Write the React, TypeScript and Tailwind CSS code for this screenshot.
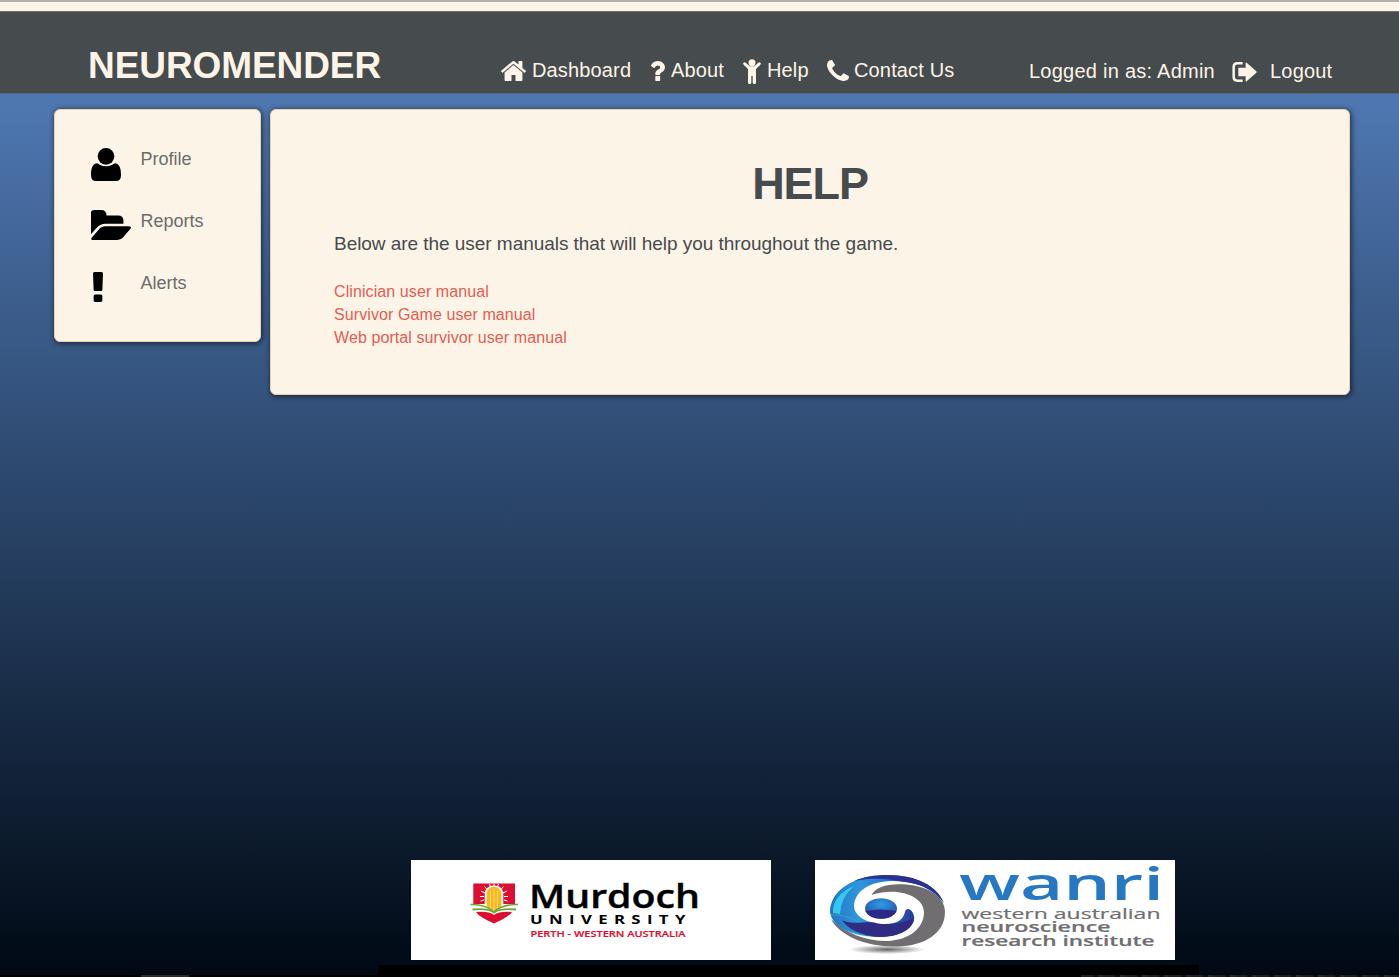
import React from "react";

type IconProps = { className?: string };

const HomeIcon = ({ className }: IconProps) => (
  <svg viewBox="89 253 1614 1283" preserveAspectRatio="none" className={className} fill="currentColor">
    <path d="M1472 992v480q0 26-19 45t-45 19h-384v-384h-256v384h-384q-26 0-45-19t-19-45v-480q0-1 .5-3t.5-3l575-474 575 474q1 2 1 6zm223-69l-62 74q-8 9-21 11h-3q-13 0-21-7l-692-577-692 577q-12 8-24 7-13-2-21-11l-62-74q-8-10-7-23.5t11-21.5l719-599q32-26 76-26t76 26l244 204v-195q0-14 9-23t23-9h192q14 0 23 9t9 23v408l219 182q10 8 11 21.5t-7 23.5z" />
  </svg>
);

const QuestionIcon = ({ className }: IconProps) => (
  <svg viewBox="484 256 922 1280" preserveAspectRatio="none" className={className} fill="currentColor">
    <path d="M1088 1256v240q0 16-12 28t-28 12h-240q-16 0-28-12t-12-28v-240q0-16 12-28t28-12h240q16 0 28 12t12 28zm316-600q0 54-15.5 101t-35 76.5-55 59.5-57.5 43.5-61 35.5q-41 23-68.5 65t-27.5 67q0 17-12 32.5t-28 15.5h-240q-15 0-25.5-18.5t-10.5-37.5v-45q0-83 65-156.5t143-108.5q59-27 84-56t25-76q0-42-46.5-74t-107.5-32q-65 0-108 29-35 25-107 115-13 16-31 16-12 0-25-8l-164-125q-13-10-15.5-25t5.5-28q160-266 464-266 80 0 161 31t146 83 106 127.5 41 158.5z" />
  </svg>
);

const ChildIcon = ({ className }: IconProps) => (
  <svg viewBox="0 0 54 75" className={className} fill="currentColor">
    <circle cx="27" cy="11" r="10.5" />
    <path d="M1.5 11Q5 8 8 11L20 22H34L46 11Q49 8 52.500 11Q55 14 52 17L39 30V71Q39 75 34.500 75Q29 75 29 71V51H25V71Q25 75 20 75Q15 75 15 71V30L2 17Q-1 14 1.500 11Z" />
  </svg>
);

const PhoneIcon = ({ className }: IconProps) => (
  <svg viewBox="192 128 1408 1408" preserveAspectRatio="none" className={className} fill="currentColor">
    <path d="M1600 1240q0 27-10 70.5t-21 68.5q-21 50-122 106-94 51-186 51-27 0-52.5-3.5t-57.5-12.5-47.5-14.5-55.5-20.5-49-18q-98-35-175-83-128-79-264.5-215.5t-215.5-264.5q-48-77-83-175-3-9-18-49t-20.5-55.5-14.5-47.5-12.5-57.5-3.5-52.5q0-92 51-186 56-101 106-122 25-11 68.5-21t70.5-10q14 0 21 3 18 6 53 76 11 19 30 54t35 63.5 31 53.5q3 4 17.5 25t21.5 35.5 7 28.5q0 20-28.5 50t-62 55-62 53-28.5 46q0 9 5 22.5t8.5 20.5 14 24 11.5 19q76 137 174 235t235 174q2 1 19 11.5t24 14 20.5 8.5 22.5 5q18 0 46-28.5t53-62 55-62 50-28.5q14 0 28.5 7t35.5 21.5 25 17.5q25 15 53.5 31t63.5 35 54 30q70 35 76 53 3 7 3 21z" />
  </svg>
);

const LogoutIcon = ({ className }: IconProps) => (
  <svg viewBox="0 0 73 60" className={className} fill="currentColor">
    <path d="M31 4H15Q4 4 4 15V45Q4 56 15 56H31" fill="none" stroke="currentColor" strokeWidth="7.500" />
    <path d="M18 17H40V3Q40 0 43 2L72 28Q74 30 72 32L43 58Q40 60 40 57V43H18Z" />
  </svg>
);

const UserIcon = ({ className }: IconProps) => (
  <svg viewBox="0 0 90 99" className={className} fill="currentColor">
    <circle cx="45" cy="25" r="25" />
    <path d="M17 45.500C21 45.500 23 48 26 50Q45 59 64 50C67 48 69 45.500 73 45.500C86 48 90 62 90 80Q90 99 75 99H15Q0 99 0 80C0 62 4 48 17 45.500Z" />
  </svg>
);

const FolderIcon = ({ className }: IconProps) => (
  <svg viewBox="0 128 1816 1408" preserveAspectRatio="none" className={className} fill="currentColor">
    <path d="M1815 952q0 31-31 66l-336 396q-43 51-120.5 86.5t-143.5 35.5h-1088q-34 0-60.5-13t-26.500-43q0-31 31-66l336-396q43-51 120.5-86.5t143.5-35.5h1088q34 0 60.5 13t26.500 43zm-343-344v160h-832q-94 0-197 47.5t-164 119.5l-337 396-5 6q0-4-.5-12.5t-.5-12.5v-960q0-92 66-158t158-66h320q92 0 158 66t66 158v32h544q92 0 158 66t66 158z" />
  </svg>
);

const ExclamationIcon = ({ className }: IconProps) => (
  <svg viewBox="674 128 444 1408" preserveAspectRatio="none" className={className} fill="currentColor">
    <path d="M1088 1248v224q0 26-19 45t-45 19h-256q-26 0-45-19t-19-45v-224q0-26 19-45t45-19h256q26 0 45 19t19 45zm30-1056l-28 768q-1 26-20.5 45t-45.500 19h-256q-26 0-45.500-19t-20.5-45l-28-768q-1-26 17.5-45t44.500-19h320q26 0 44.500 19t17.5 45z" />
  </svg>
);

const MurdochLogo = () => (
  <svg viewBox="0 0 360 100" className="block h-[100px] w-[360px] bg-white">
    <path d="M62.300 23.500H104V44H62.300Z" fill="#dc0f32" />
    <g stroke="#fff" strokeWidth="1">
      <path d="M83 23.800V28M78.500 24L80 28M87.500 24L86 28M73.500 26.500L76.500 30M92.500 26.500L89.500 30M70 31L74 33M96 31L92 33M69 36.500H73M97 36.500H93M69.500 41L73 40M96.500 41L93 40" />
    </g>
    <rect x="73.700" y="25.500" width="18.600" height="28" rx="8.500" fill="#fff" />
    <path d="M62 44H75Q83 54 91 44H104V53Q90 52 83 56Q76 52 62 53Z" fill="#fff" />
    <path d="M65 52Q78 51 83 55Q88 51 101 52Q98 57 83 63.500Q68 57 65 52Z" fill="#dc0f32" />
    <path d="M75.700 33Q77 27 83 26.700Q89 27 90.300 33V46Q88 50.500 83 50.500Q78 50.500 75.700 46Z" fill="#fbb917" />
    <path d="M79.500 31V49M83 29V50M86.500 31V49" stroke="#fde39a" strokeWidth=".8" />
    <path d="M59.500 44.500Q74 44 83 51.800Q92 44 107 44.500" fill="none" stroke="#70a53b" strokeWidth="1.600" />
    <path d="M61.500 49.500Q77 48 83 52.500Q89 48 105 49.500" fill="none" stroke="#70a53b" strokeWidth="1.800" />
    <text x="118" y="47.500" fontFamily="Open Sans" fontSize="33" fontWeight="600" stroke="#000" strokeWidth=".4" textLength="171" lengthAdjust="spacingAndGlyphs">Murdoch</text>
    <g fontFamily="Open Sans" fontSize="12" fontWeight="700" transform="translate(119 63.500) scale(1.400 1)">
      <text textLength="111" lengthAdjust="spacing">UNIVERSITY</text>
    </g>
    <text x="119.500" y="77" fontFamily="Open Sans" fontSize="9.200" fontWeight="600" fill="#dc0f32" stroke="#dc0f32" strokeWidth=".2" textLength="155" lengthAdjust="spacingAndGlyphs">PERTH - WESTERN AUSTRALIA</text>
  </svg>
);

const WanriLogo = () => (
  <svg viewBox="0 0 360 100" className="block h-[100px] w-[360px] bg-white">
    <defs>
      <linearGradient id="eye" x1="0" y1="0" x2="1" y2="0">
        <stop offset="0" stopColor="#2474bf" />
        <stop offset="0.250" stopColor="#2c97de" />
        <stop offset="0.500" stopColor="#2678cc" />
        <stop offset="0.750" stopColor="#2a3796" />
        <stop offset="1" stopColor="#2a5cb4" />
      </linearGradient>
      <radialGradient id="pupil" cx=".5" cy=".3" r=".7">
        <stop offset="0" stopColor="#2d9ce5" />
        <stop offset="1" stopColor="#2a4aa5" />
      </radialGradient>
      <radialGradient id="shadow">
        <stop offset="0" stopColor="#666" />
        <stop offset="1" stopColor="#fff" />
      </radialGradient>
    </defs>
    <ellipse cx="72" cy="89.500" rx="38" ry="4.500" fill="url(#shadow)" />
    <path d="M56.700 35C60 28 70 24.300 84 24.300C110 24.300 130 35 130 52C130 73 110 86 82 86.500C50 87 24 75 16 59C30 73 50 81 72 81C96 80 109 67 109 52C109 37 84 26 56.700 35Z" fill="#706e71" />
    <path d="M129 43C122 26 102 15 72 15C38 15 15 31 15 52C17 68 40 77 64 77C87 77 101 66 99 56C97 48 91 47 90 52C88 60 82 64 70 64C52 64 39 56 39 46C40 30 56 21 78 21C102 21 119 29 129 43Z" fill="url(#eye)" />
    <path d="M27 60C38 66 55 60 62 63.500C78 66 88 61 99 59C97 71 82 77 64 77C45 76 32 68 27 60Z" fill="#302b83" />
    <path d="M129 43C122 26 102 15 72 15C60 15 48 17 39 21C58 17 75 19 86 21.500C107 23 121 32 129 43Z" fill="#2b3190" />
    <path d="M18 53C17 41 26 31 39 26Q26 37 25 54Z" fill="#36d5f7" opacity=".85" />
    <path d="M16 55Q30 54 44 62" fill="none" stroke="#4c9bdc" strokeWidth=".8" />
    <ellipse cx="66" cy="48.500" rx="16" ry="10.300" fill="url(#pupil)" />
    <path d="M50.500 51Q65 48 81.500 51Q78 58.800 66 58.800Q54 58.500 50.500 51Z" fill="#2b2986" />
    <text x="144" y="40" fontFamily="Open Sans" fontSize="46" fontWeight="600" fill="#2678c2" textLength="205" lengthAdjust="spacingAndGlyphs">wanri</text>
    <g fill="#706e71" stroke="#706e71" strokeWidth=".2" fontFamily="Open Sans">
      <text x="146.500" y="58.500" fontSize="14" fontWeight="500" textLength="199" lengthAdjust="spacingAndGlyphs">western australian</text>
      <text x="146.500" y="72" fontSize="14" fontWeight="600" textLength="149" lengthAdjust="spacingAndGlyphs">neuroscience</text>
      <text x="146.500" y="85.500" fontSize="14" fontWeight="600" textLength="193" lengthAdjust="spacingAndGlyphs">research institute</text>
    </g>
  </svg>
);

export default function App() {
  return (
    <div className="flex h-[977px] w-[1399px] flex-col overflow-hidden bg-black font-['Liberation_Sans',Arial,sans-serif]">
      <div className="h-[11px] shrink-0 border-t-2 border-[#b6b1ac] bg-[#fdf4e8]" />
      <header className="flex h-[83px] shrink-0 items-start border-y border-t-[#706f6b] border-b-[#586674] bg-[#464b4d] text-[20px] leading-6 text-[#fdf4e8]">
        <h1 className="ml-[88px] mt-[32px] w-[413px] text-[37px] leading-[44px] font-bold tracking-[-0.08px]">NEUROMENDER</h1>
        <nav className="mt-[46px] flex h-6 items-center whitespace-nowrap tracking-[0.15px]">
          <a className="flex w-[150px] items-center"><HomeIcon className="mr-[6px] mt-[2px] h-[20px] w-[25px]" />Dashboard</a>
          <a className="flex w-[92px] items-center"><QuestionIcon className="mr-[6px] mt-[2px] h-[20px] w-[14px]" />About</a>
          <a className="flex w-[84px] items-center"><ChildIcon className="mr-[6px] mt-[3px] h-[25px] w-[18px]" />Help</a>
          <a className="flex w-[202px] items-center"><PhoneIcon className="mr-[5px] h-[21px] w-[22px]" />Contact Us</a>
        </nav>
        <div className="mt-[47px] flex h-6 items-center whitespace-nowrap">
          <span className="w-[203px] tracking-[0.25px]">Logged in as: Admin</span>
          <a className="flex items-center tracking-[0.2px]"><LogoutIcon className="mr-[13px] mt-[2px] h-[20px] w-[25px]" />Logout</a>
        </div>
      </header>
      <div className="flex h-[881px] shrink-0 flex-col justify-between bg-linear-to-b/srgb from-[#4f78b2] via-[#263f61] via-[52%] to-[#000914]">
        <div className="mt-[15px] ml-[54px] flex items-start gap-[9px]">
          <aside className="flex h-[233px] w-[207px] flex-col rounded-[6px] border border-[#edd2a7] bg-[#fdf4e8] pt-[37px] pl-[36px] text-[18px] leading-6 text-[#6b6c6c] shadow-[1px_1px_5px_1px_rgba(0,0,0,0.5)]">
            <a className="flex h-[62px]"><span className="mt-[1px] w-[49.5px] text-black"><UserIcon className="h-[33px] w-[30px]" /></span>Profile</a>
            <a className="flex h-[62px]"><span className="mt-[1px] w-[49.5px] text-black"><FolderIcon className="h-[30px] w-[40px]" /></span>Reports</a>
            <a className="flex h-[62px]"><span className="mt-[1px] w-[49.5px] pl-[2px] text-black"><ExclamationIcon className="h-[30px] w-[10px]" /></span>Alerts</a>
          </aside>
          <main className="h-[286px] w-[1080px] rounded-[6px] border border-[#edd2a7] bg-[#fdf4e8] px-[63px] pt-[48px] text-[#464b4d] shadow-[1px_1px_5px_1px_rgba(0,0,0,0.5)]">
            <h2 className="text-center text-[45px] leading-[52px] font-bold tracking-[-1.1px]">HELP</h2>
            <p className="mt-[22px] text-[19px] leading-6 tracking-[-0.045px]">Below are the user manuals that will help you throughout the game.</p>
            <ul className="mt-[24px] text-[16px] leading-[23px] tracking-[0.09px] text-[#e35d50]">
              <li>Clinician user manual</li>
              <li>Survivor Game user manual</li>
              <li>Web portal survivor user manual</li>
            </ul>
          </main>
        </div>
        <footer className="ml-[378px] flex h-[115px] w-[821px] gap-[44px] border-b-10 border-black pl-[33px]">
          <MurdochLogo />
          <WanriLogo />
        </footer>
      </div>
      <div className="flex h-[2px]">
        <div className="ml-[141px] h-full w-[48px] bg-[#292c2e]" />
        <div className="ml-[892px] h-full w-[318px] bg-[repeating-linear-gradient(90deg,#1d1f21_0px,#1d1f21_12px,#0b0d0f_12px,#0b0d0f_17px,#26282b_17px,#26282b_22px)]" />
      </div>
    </div>
  );
}
